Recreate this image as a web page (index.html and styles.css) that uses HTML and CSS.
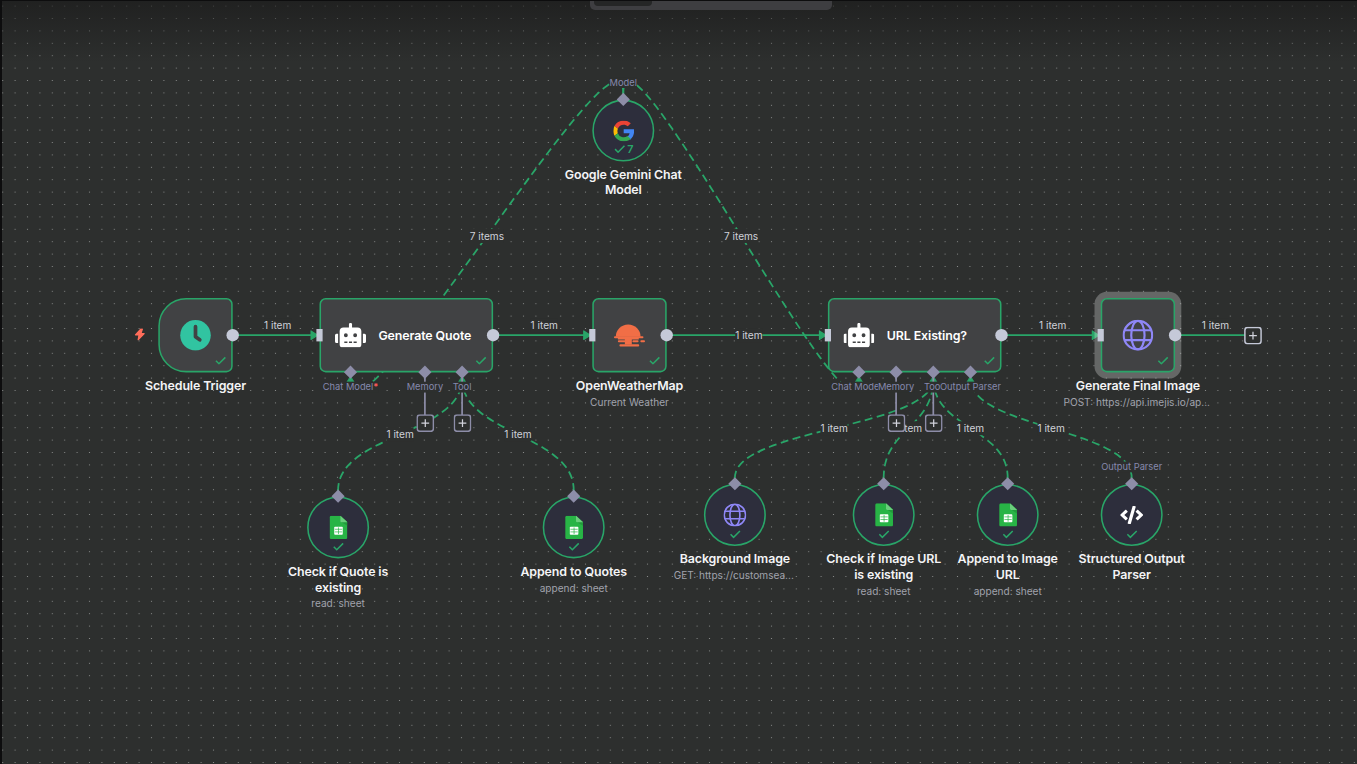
FILE: index.html
```html
<!DOCTYPE html>
<html lang="en">
<head>
<meta charset="utf-8">
<title>Workflow</title>
<link rel="stylesheet" href="styles.css">
</head>
<body>
<svg class="defs" width="0" height="0" aria-hidden="true">
  <symbol id="check" viewBox="0 0 16 12"><path d="M1.5 6.2 5.6 10.4 14.4 1.6" fill="none" stroke="currentColor" stroke-width="2.1"/></symbol>
  <symbol id="robot" viewBox="0 0 640 512"><path fill="#fff" d="M32,224H64V416H32A31.96,31.96,0,0,1,0,384V256A31.96,31.96,0,0,1,32,224Zm512-48V448a64.06,64.06,0,0,1-64,64H160a64.06,64.06,0,0,1-64-64V176a79.97,79.97,0,0,1,80-80H288V32a32,32,0,0,1,64,0V96H464A79.97,79.97,0,0,1,544,176ZM264,256a40,40,0,1,0-40,40A40,40,0,0,0,264,256Zm-8,128H192v32h64Zm96,0H288v32h64ZM456,256a40,40,0,1,0-40,40A40,40,0,0,0,456,256Zm-8,128H384v32h64ZM640,256V384a31.96,31.96,0,0,1-32,32H576V224h32A31.96,31.96,0,0,1,640,256Z"/></symbol>
  <symbol id="globe" viewBox="0 0 40 40"><g fill="none" stroke="#8f87f7" stroke-width="2.8"><circle cx="20" cy="20" r="18.4"/><ellipse cx="20" cy="20" rx="8.6" ry="18.4"/><path d="M2.8 13.6h34.4M2.8 26.4h34.4"/></g></symbol>
  <symbol id="sheet" viewBox="0 0 23 30"><path fill="#28b446" d="M2 0h12l9 8v20a2 2 0 0 1-2 2H2a2 2 0 0 1-2-2V2a2 2 0 0 1 2-2z"/><path fill="#219b3b" d="M15 8h8v5z"/><path fill="#6ace7c" d="M14 0l9 8.5h-7.5a1.500 1.500 0 0 1-1.500-1.500z"/><rect x="6" y="14" width="11" height="10.500" rx="1" fill="#fff"/><path d="M6.800 17.400h9.400M6.800 20.800h9.400M11.500 15v8.700" stroke="#28b446" stroke-width=".9"/></symbol>
  <symbol id="google" viewBox="4 4 40 40"><path fill="#4285f4" d="M43.600 20.500H24v7.600h11.300c-.7 3.400-2.500 5.700-4.900 7.300l6.200 5.200C40.500 37 44 31.600 44 24c0-1.200-.1-2.400-.4-3.500z"/><path fill="#ea4335" d="M6.300 14.700l6.600 4.800C14.700 15.100 19 12 24 12c3.100 0 5.800 1.200 7.900 3.100l5.700-5.700C34 6.100 29.300 4 24 4 16.300 4 9.700 8.300 6.300 14.700z"/><path fill="#fbbc05" d="M6.300 14.700A20 20 0 0 0 6.300 33.300l6.500-5a12 12 0 0 1 .1-8.800z"/><path fill="#34a853" d="M24 44c5.200 0 9.900-2 13.400-5.200l-6.200-5.200A11.900 11.900 0 0 1 12.800 28.300l-6.500 5C9.600 39.600 16.200 44 24 44z"/></symbol>
  <symbol id="code" viewBox="0 0 640 512"><path fill="#fff" d="M278.9 511.500l-61-17.700c-6.400-1.800-10-8.500-8.200-14.900L346.200 8.700c1.800-6.400 8.500-10 14.900-8.200l61 17.700c6.400 1.800 10 8.500 8.200 14.900L293.800 503.300c-1.900 6.400-8.500 10.100-14.900 8.200zm-114-112.200l43.500-46.400c4.600-4.900 4.300-12.700-.8-17.200L117 256l90.600-79.700c5.100-4.500 5.500-12.300.8-17.200l-43.500-46.400c-4.500-4.800-12.100-5.100-17-.5L3.800 247.200c-5.100 4.700-5.100 12.800 0 17.500l144.100 135.100c4.900 4.600 12.500 4.400 17-.5zm327.200.6l144.100-135.100c5.100-4.700 5.100-12.800 0-17.500L492.100 112.100c-4.800-4.500-12.400-4.300-17 .5L431.600 159c-4.600 4.900-4.300 12.700.8 17.200L523 256l-90.600 79.700c-5.100 4.500-5.500 12.300-.8 17.200l43.500 46.400c4.500 4.900 12.100 5.100 17 .6z"/></symbol>
  <symbol id="arrow-right" viewBox="0 0 10 14"><path d="M1 1.500v11L9.500 7z" fill="#29a568" stroke="#29a568" stroke-width="1.600" stroke-linejoin="round"/></symbol>
  <symbol id="arrow-up" viewBox="0 0 12 9"><path d="M1.500 8h9L6 1z" fill="#29a568" stroke="#29a568" stroke-linejoin="round"/></symbol>
  <symbol id="plus" viewBox="0 0 23 23"><rect x="1" y="1" width="21" height="21" rx="3.500" fill="#2d2f2e" stroke="currentColor" stroke-width="2"/><path d="M6.500 11.500h10M11.500 6.500v10" stroke="#d2d3dc" stroke-width="1.600"/></symbol>
</svg>

<main class="viewport">
  <svg class="grid" width="1357" height="764" aria-hidden="true">
    <defs><pattern id="dots" x="-3.500" y="-.1" width="12.400" height="12.400" patternUnits="userSpaceOnUse"><circle cx="6.200" cy="6.200" r=".58"/></pattern></defs>
    <rect width="1357" height="764" fill="url(#dots)"/>
  </svg>
  <div class="fade"></div>

  <div class="canvas">
    <svg class="edges" width="1760" height="990" aria-hidden="true">
      <g class="main">
        <path d="M304 432H412M640 432H764M864 432H1068M1296 432H1420M1520 432H1610"/>
      </g>
      <g class="dashed">
        <path d="M808 120C808 .1 456 607.900 456 488"/>
        <path d="M808 120C808 .1 1112 607.900 1112 488"/>
        <path d="M440 632C440 560 600 560 600 488"/>
        <path d="M744 632C744 560 600 560 600 488"/>
        <path d="M952 616C952 552 1208 552 1208 488"/>
        <path d="M1144 616C1144 552 1208 552 1208 488"/>
        <path d="M1304 616C1304 552 1208 552 1208 488"/>
        <path d="M1464 616C1464 552 1256 552 1256 488"/>
      </g>
      <g>
        <use href="#arrow-right" x="404" y="425" width="10" height="14"/>
        <use href="#arrow-right" x="756" y="425" width="10" height="14"/>
        <use href="#arrow-right" x="1060" y="425" width="10" height="14"/>
        <use href="#arrow-right" x="1412" y="425" width="10" height="14"/>
        <use href="#arrow-up" x="450" y="484" width="12" height="9"/>
        <use href="#arrow-up" x="594" y="484" width="12" height="9"/>
        <use href="#arrow-up" x="1106" y="484" width="12" height="9"/>
        <use href="#arrow-up" x="1202" y="484" width="12" height="9"/>
        <use href="#arrow-up" x="1250" y="484" width="12" height="9"/>
      </g>
      <path class="stem" d="M552 480V536M600 480V536M1160 480V536M1208 480V536"/>
    </svg>

    <span class="count" style="left:362px;top:419px">1 item</span>
    <span class="count" style="left:706px;top:419px">1 item</span>
    <span class="count" style="left:970px;top:432px">1 item</span>
    <span class="count" style="left:1362px;top:419px">1 item</span>
    <span class="count" style="left:1572px;top:419px">1 item</span>
    <span class="count" style="left:632px;top:304px">7 items</span>
    <span class="count" style="left:960px;top:304px">7 items</span>
    <span class="count" style="left:520px;top:560px">1 item</span>
    <span class="count" style="left:672px;top:560px">1 item</span>
    <span class="count" style="left:1080px;top:552px">1 item</span>
    <span class="count" style="left:1176px;top:552px">1 item</span>
    <span class="count" style="left:1256px;top:552px">1 item</span>
    <span class="count" style="left:1360px;top:552px">1 item</span>

    <svg class="bolt" viewBox="0 0 14 16"><path d="M8.500 1 1.500 8.600h4.600L5 15l7.800-8H8.600L10.500 1z" fill="#ff6d5a" stroke="#ff6d5a" stroke-width="1.500" stroke-linejoin="round"/></svg>

    <section class="node" style="left:208px;top:384px">
      <div class="box trigger">
        <svg class="clock" viewBox="0 0 40 40"><circle cx="20" cy="20" r="19.700" fill="#31c4a1"/><path d="M20 9v13l5.500 4" fill="none" stroke="#414244" stroke-width="4.800" stroke-linecap="round" stroke-linejoin="round"/></svg>
        <svg class="ok"><use href="#check"/></svg>
      </div>
      <i class="out"></i>
      <h2>Schedule Trigger</h2>
    </section>

    <section class="node wide" style="left:416px;top:384px">
      <div class="box">
        <svg class="robot"><use href="#robot"/></svg><span class="name">Generate Quote</span>
        <svg class="ok"><use href="#check"/></svg>
      </div>
      <i class="in"></i><i class="out"></i>
      <i class="port" style="left:40px"></i><i class="port" style="left:136px"></i><i class="port" style="left:184px"></i>
      <span class="slot" style="left:40px">Chat Model<b>*</b></span><span class="slot" style="left:136px">Memory</span><span class="slot" style="left:184px">Tool</span>
      <svg class="add" style="left:136px"><use href="#plus"/></svg><svg class="add" style="left:184px"><use href="#plus"/></svg>
    </section>

    <section class="node" style="left:768px;top:384px">
      <div class="box">
        <svg class="sun" viewBox="0 0 40 32"><g fill="#f16e46"><path d="M2.300 18A16 15.800 0 0 1 34.300 18z"/><rect y="17.300" width="38" height="2.500" rx="1.200"/><path d="M5 19h27v2.500H5z"/><rect x="5" y="22.600" width="17" height="2.500" rx="1.200"/><path d="M14 19h9v9h-9z"/><rect x="23.700" y="22.600" width="8" height="2.500" rx="1.200"/><rect x="34" y="22.600" width="6" height="2.500" rx="1.200"/><rect x="7" y="27.800" width="25.500" height="2.700" rx="1.300"/></g></svg>
        <svg class="ok"><use href="#check"/></svg>
      </div>
      <i class="in"></i><i class="out"></i>
      <h2>OpenWeatherMap</h2><p>Current Weather</p>
    </section>

    <section class="node wide" style="left:1072px;top:384px">
      <div class="box">
        <svg class="robot"><use href="#robot"/></svg><span class="name">URL Existing?</span>
        <svg class="ok"><use href="#check"/></svg>
      </div>
      <i class="in"></i><i class="out"></i>
      <i class="port" style="left:40px"></i><i class="port" style="left:88px"></i><i class="port" style="left:136px"></i><i class="port" style="left:184px"></i>
      <span class="slot" style="left:40px">Chat Model<b>*</b></span><span class="slot" style="left:88px">Memory</span><span class="slot" style="left:136px">Tool</span><span class="slot" style="left:184px">Output Parser</span>
      <svg class="add" style="left:88px"><use href="#plus"/></svg><svg class="add" style="left:136px"><use href="#plus"/></svg>
    </section>

    <section class="node" style="left:1424px;top:384px">
      <div class="box selected">
        <svg class="globe"><use href="#globe"/></svg>
        <svg class="ok"><use href="#check"/></svg>
      </div>
      <i class="in"></i><i class="out"></i>
      <h2>Generate Final Image</h2><p class="url">POST: https://api.imejis.io/ap...</p>
    </section>
    <svg class="add end"><use href="#plus"/></svg>

    <section class="node sub" style="left:768px;top:128px">
      <div class="box"><svg class="google"><use href="#google"/></svg><span class="ok runs"><svg><use href="#check"/></svg>7</span></div>
      <i class="port"></i><span class="slot">Model</span>
      <h2>Google Gemini Chat Model</h2>
    </section>
    <section class="node sub low" style="left:400px;top:640px">
      <div class="box"><svg class="sheet"><use href="#sheet"/></svg><svg class="ok"><use href="#check"/></svg></div>
      <i class="port"></i>
      <h2>Check if Quote is existing</h2><p>read: sheet</p>
    </section>
    <section class="node sub low" style="left:704px;top:640px">
      <div class="box"><svg class="sheet"><use href="#sheet"/></svg><svg class="ok"><use href="#check"/></svg></div>
      <i class="port"></i>
      <h2>Append to Quotes</h2><p>append: sheet</p>
    </section>
    <section class="node sub" style="left:912px;top:624px">
      <div class="box"><svg class="globe"><use href="#globe"/></svg><svg class="ok"><use href="#check"/></svg></div>
      <i class="port"></i>
      <h2>Background Image</h2><p class="url">GET: https://customsea...</p>
    </section>
    <section class="node sub" style="left:1104px;top:624px">
      <div class="box"><svg class="sheet"><use href="#sheet"/></svg><svg class="ok"><use href="#check"/></svg></div>
      <i class="port"></i>
      <h2>Check if Image URL is existing</h2><p>read: sheet</p>
    </section>
    <section class="node sub" style="left:1264px;top:624px">
      <div class="box"><svg class="sheet"><use href="#sheet"/></svg><svg class="ok"><use href="#check"/></svg></div>
      <i class="port"></i>
      <h2>Append to Image URL</h2><p>append: sheet</p>
    </section>
    <section class="node sub" style="left:1424px;top:624px">
      <div class="box"><svg class="code"><use href="#code"/></svg><svg class="ok"><use href="#check"/></svg></div>
      <i class="port"></i><span class="slot">Output Parser</span>
      <h2>Structured Output Parser</h2>
    </section>
  </div>

  <div class="tabs"><span class="tab"></span></div>
</main>
</body>
</html>
```

FILE: styles.css
```css
* { box-sizing: border-box; }
body { margin: 0; background: #0d0d0e; font-family: Inter, "Liberation Sans", sans-serif; }
.defs { position: absolute; }
.viewport { position: relative; width: 1357px; height: 764px; overflow: hidden; background: #2d2f2e; }
.viewport::after { content: ""; position: absolute; inset: 0; border-top: 1px solid #0d0d0e; border-left: 2px solid #0d0d0e; }
.grid { position: absolute; inset: 0; fill: #959796; }
.fade { position: absolute; inset: 0 0 auto; height: 62px; background: linear-gradient(rgba(26, 26, 26, .68), rgba(30, 30, 30, 0)); }
.tabs { position: absolute; left: 590px; top: 0; width: 242px; height: 10px; padding-left: 4px; background: #3e3e41; border-radius: 0 0 5px 5px; }
.tab { display: block; width: 58px; height: 6px; background: #252626; border-radius: 0 0 4px 4px; }

.canvas { position: absolute; left: 0; top: 0; width: 1760px; height: 990px; transform-origin: 0 0; transform: translate(-2.9px, .4px) scale(.775); }
.edges { position: absolute; inset: 0; }
.main path { stroke: #29a568; stroke-width: 2.3; }
.dashed path { fill: none; stroke: #29a568; stroke-width: 2.3; stroke-dasharray: 8 8; stroke-linecap: square; }
.stem { stroke: #8d8da8; stroke-width: 2.2; }

.count { position: absolute; transform: translate(-50%, -50%); font-size: 13px; line-height: 18px; color: #cfd1d9; background: #2d2f2e; white-space: nowrap; }
.bolt { position: absolute; left: 177px; top: 423px; width: 14px; height: 16px; }

.node { position: absolute; width: 96px; display: flex; flex-direction: column; align-items: center; }
.wide { width: 224px; }
.sub { width: 80px; }
.box { position: relative; flex: none; width: 100%; height: 96px; display: flex; align-items: center; justify-content: center; background: #414244; border: 2px solid #29a568; border-radius: 8px; }
.trigger { border-radius: 36px 8px 8px 36px; }
.selected { box-shadow: 0 0 0 8px rgba(255, 255, 255, .27); }
.wide .box { justify-content: flex-start; padding-left: 18px; gap: 16px; }
.sub .box { height: 80px; border-radius: 50%; background: #2d2e3c; }
.ok { position: absolute; right: 6px; bottom: 8px; width: 15px; height: 11.500px; color: #29a568; }
.sub .ok { right: auto; left: 30.500px; bottom: 7.500px; }
.sub .runs { left: 26px; bottom: 6px; width: auto; height: 16px; display: flex; align-items: center; gap: 2px; font-size: 14px; font-weight: 600; line-height: 16px; }
.runs svg { width: 15px; height: 11.500px; }

.clock, .box > .globe { width: 40px; height: 40px; }
.robot { width: 40px; height: 32px; }
.sun { width: 40px; height: 32px; }
.sub .box > .globe { width: 30px; height: 30px; }
.sheet { width: 23px; height: 30px; }
.google { width: 27px; height: 27px; }
.code { width: 30px; height: 24px; }
.name { font-size: 16px; font-weight: 600; letter-spacing: -.15px; color: #fff; white-space: nowrap; }

h2 { margin: 7px 0 0; width: 176px; text-align: center; font-size: 16px; line-height: 20px; font-weight: 600; letter-spacing: -.15px; color: #f4f4f6; }
.sub h2 { margin-top: 6.300px; width: 160px; }
.low h2 { margin-top: 7px; }
p { margin: 2.500px 0 0; font-size: 13px; line-height: 18px; color: #a0a2ac; white-space: nowrap; }
.low p { margin-top: 2px; }
.url { margin-left: -3px; }

.in, .out, .port, .slot, .add { position: absolute; }
.in { left: -4px; top: 40px; width: 8px; height: 16px; background: #c5c9d8; }
.out { right: -8px; top: 40px; width: 16px; height: 16px; border-radius: 50%; background: #c5c9d8; }
.port { top: 96px; width: 12.400px; height: 12.400px; background: #8d8da8; transform: translate(-50%, -50%) rotate(45deg); }
.slot { top: 100.500px; transform: translate(-50%, 7px); font-size: 12px; line-height: 14px; color: #8689ad; background: #2d2f2e; white-space: nowrap; }
.slot b { color: #ff5a5a; font-weight: 600; }
.sub .port { left: 40px; top: 0; }
.sub .slot { left: 40px; top: -36px; }
.add { top: 150.300px; width: 23px; height: 23px; margin-left: -11.500px; color: #8d8da8; }
.end { left: 1620px; top: 420.500px; color: #c5c9d8; }
```
